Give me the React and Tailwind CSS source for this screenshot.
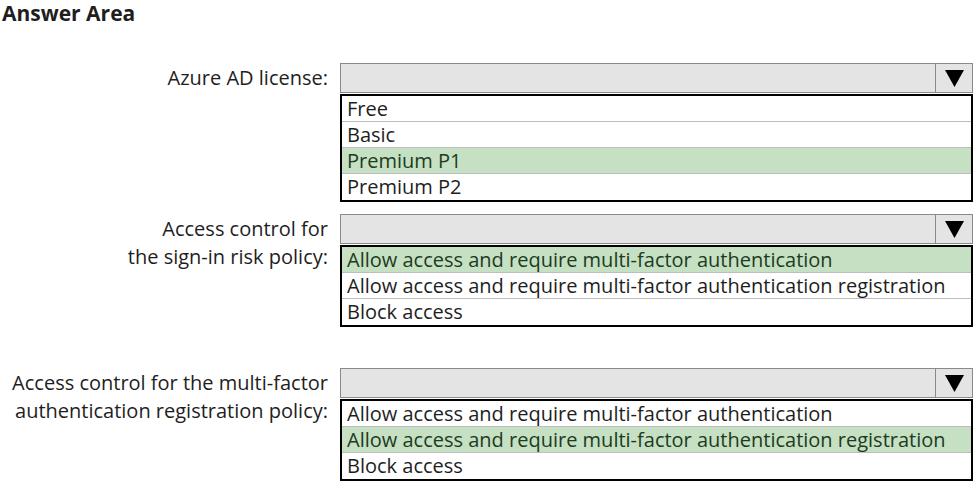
import React from "react";

const font = { fontFamily: '"Open Sans", "Noto Sans", Arial, sans-serif' };

function Arrow() {
  return (
    <div className="w-[37px] h-full border-l border-[#8a8a8a] flex items-center justify-center">
      <svg width="19" height="17" viewBox="0 0 19 17">
        <polygon points="0,0 19,0 9.5,17" fill="#000" />
      </svg>
    </div>
  );
}

function Dropdown({ items, selected }) {
  return (
    <div className="w-[633px] flex flex-col">
      <div className="h-[30px] border border-[#8a8a8a] bg-[#e4e4e4] flex justify-end">
        <Arrow />
      </div>
      <div className="mt-[1px] border-2 border-black flex flex-col">
        {items.map((t, i) => (
          <div
            key={i}
            className={
              "h-[26px] pl-[5px] flex items-center text-[20px] leading-none whitespace-nowrap " +
              (i < items.length - 1 ? "border-b border-[#bdbdbd] " : "") +
              (i === selected ? "bg-[#c5e0c3] text-[#1d3b1d]" : "bg-white text-[#1e1e1e]")
            }
          >
            {t}
          </div>
        ))}
      </div>
    </div>
  );
}

function Section({ label, items, selected, className }) {
  return (
    <div className={"flex " + (className || "")}>
      <div className="w-[340px] pr-[12px] text-right text-[20px] leading-[28px] text-[#1e1e1e] pt-[1px]">
        {label.map((l, i) => (
          <div key={i} className="whitespace-nowrap">{l}</div>
        ))}
      </div>
      <Dropdown items={items} selected={selected} />
    </div>
  );
}

export default function App() {
  return (
    <div className="w-[974px] h-[481px] bg-white overflow-hidden" style={font}>
      <div className="pl-[2px] pt-[1px] text-[21px] leading-[24px] font-bold text-[#1e1e1e]">Answer Area</div>
      <Section
        className="mt-[38px]"
        label={["Azure AD license:"]}
        items={["Free", "Basic", "Premium P1", "Premium P2"]}
        selected={2}
      />
      <Section
        className="mt-[12px]"
        label={["Access control for", "the sign-in risk policy:"]}
        items={[
          "Allow access and require multi-factor authentication",
          "Allow access and require multi-factor authentication registration",
          "Block access",
        ]}
        selected={0}
      />
      <Section
        className="mt-[41px]"
        label={["Access control for the multi-factor", "authentication registration policy:"]}
        items={[
          "Allow access and require multi-factor authentication",
          "Allow access and require multi-factor authentication registration",
          "Block access",
        ]}
        selected={1}
      />
    </div>
  );
}
